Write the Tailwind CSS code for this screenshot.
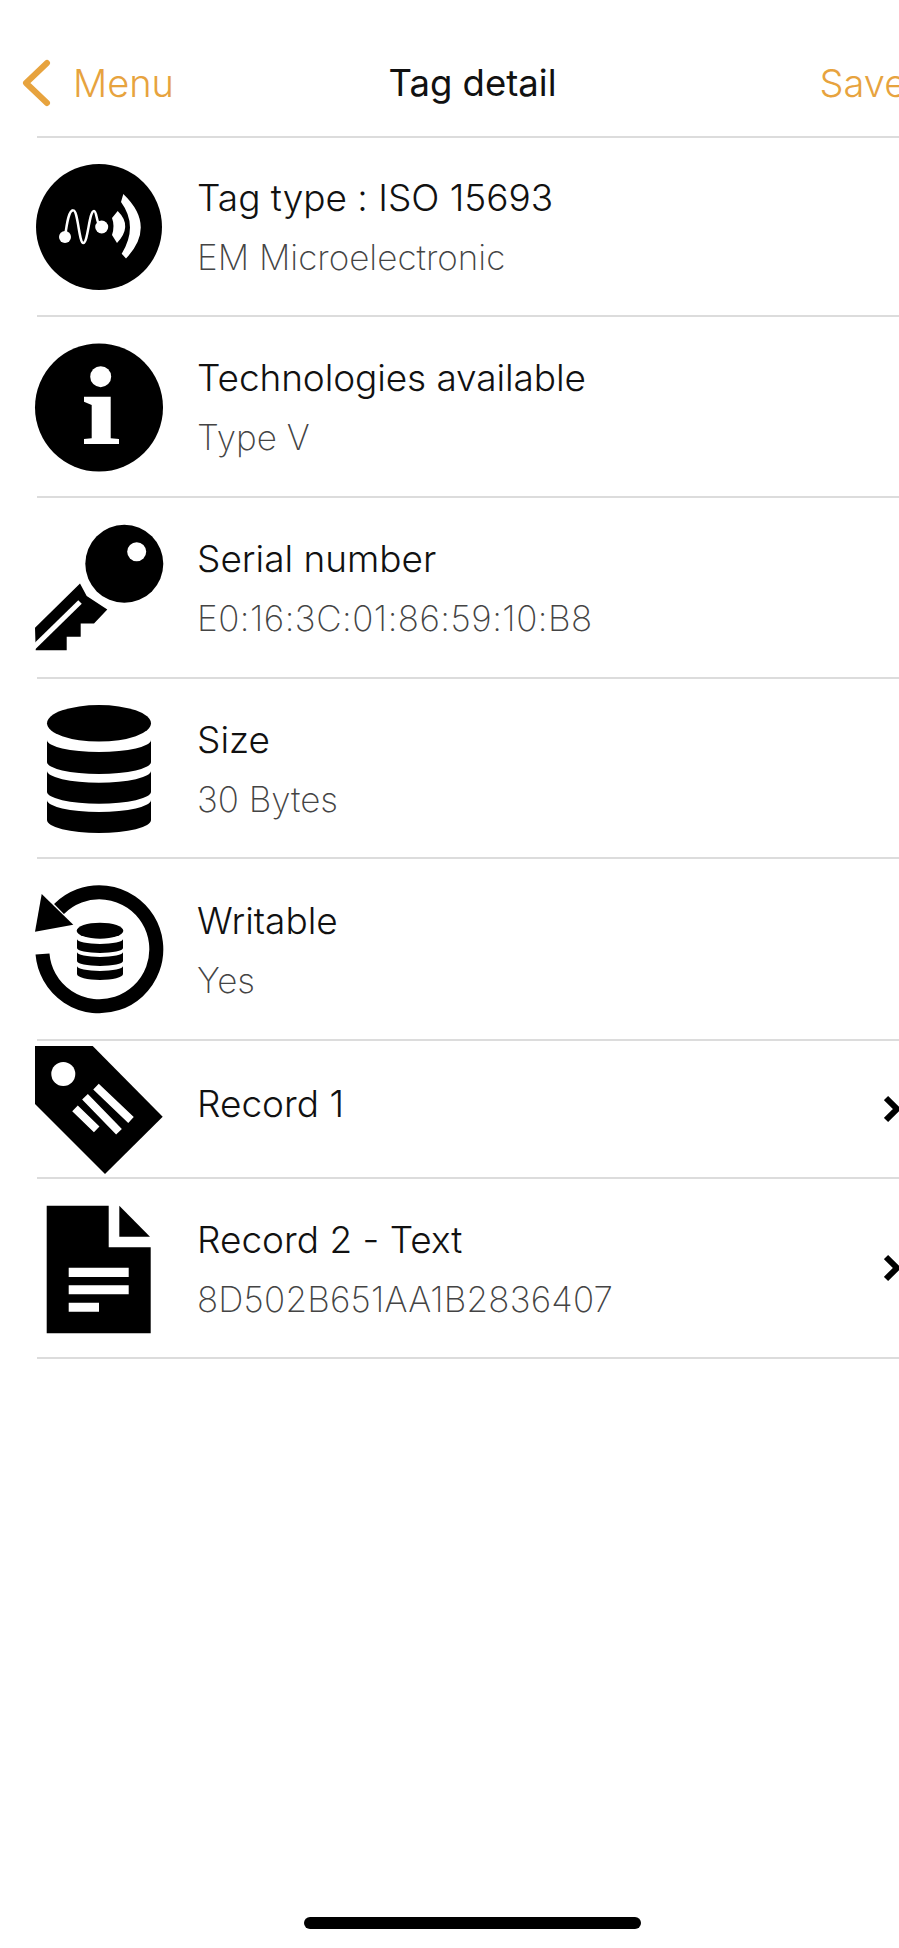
<!DOCTYPE html>
<html lang="en">
<head>
  <meta charset="UTF-8">
  <meta name="viewport" content="width=device-width,initial-scale=1.0">
  <title>Tag detail</title>
  <script src="https://cdn.jsdelivr.net/npm/@tailwindcss/browser@4"></script>
</head>
<body class="bg-white overflow-hidden font-['Inter',sans-serif] [font-feature-settings:'calt'_0] text-[#111]">
<div class="w-[899px] h-[1948px] overflow-hidden">
<div class="w-[945px] h-[1948px] flex flex-col">

  <!-- Navbar -->
  <header class="h-[136px] grid grid-cols-[1fr_auto_1fr] items-center pt-[30px]">
    <div class="flex items-center pl-[22px] gap-[21px] text-[#e7a33e]">
      <svg class="w-[30px] h-[48px]" viewBox="0 0 30 48" fill="none" stroke="currentColor" stroke-width="6" stroke-linecap="round" stroke-linejoin="round"><path d="M25 4 L4 24 L25 44"/></svg>
      <span class="text-[38px] leading-none font-light">Menu</span>
    </div>
    <h1 class="text-[36.5px] leading-none font-normal">Tag detail</h1>
    <div class="pl-[263px] text-[38px] leading-none font-light text-[#e7a33e]">Save</div>
  </header>

  <ul class="ml-[37px] border-t-2 border-[#dcdcdc]">
    <!-- Tag type -->
    <li class="h-[179px] flex items-center border-b-2 border-[#dcdcdc]">
      <svg class="-ml-[3px] w-[130px] h-[130px] shrink-0" viewBox="0 0 130 130">
        <circle cx="65" cy="65" r="63" fill="#000"/>
        <path d="M31 75 C33 60 35 48 39.3 48.3 C44 48.5 45 81 49.3 81 C54 81 55 49 60 49 C63 49 62 62 67 65" fill="none" stroke="#fff" stroke-width="2.5"/>
        <circle cx="31" cy="75" r="6" fill="#fff"/>
        <circle cx="67.7" cy="65" r="6.5" fill="#fff"/>
        <path d="M83.7 49 Q99 64 83 81 L78 73 Q81 64 78 56 Z" fill="#fff"/>
        <path d="M89.3 32 Q122.8 64 92 96.5 L87.7 91.7 Q104.6 64 87 40 Z" fill="#fff"/>
      </svg>
      <div class="ml-[33px]">
        <div class="text-[37px] leading-[44px] font-light">Tag type : ISO 15693</div>
        <div class="mt-[17px] text-[35px] leading-[40px] font-extralight text-[#444]">EM Microelectronic</div>
      </div>
    </li>
    <!-- Technologies -->
    <li class="h-[181px] flex items-center border-b-2 border-[#dcdcdc]">
      <svg class="-ml-[3px] w-[130px] h-[130px] shrink-0" viewBox="0 0 130 130">
        <circle cx="65" cy="65.5" r="64" fill="#000"/>
        <circle cx="66.7" cy="34.7" r="10.5" fill="#fff"/>
        <path d="M50 54.7 H76.7 V96.3 L85 97 V102 H50 V97 L57.7 96.3 V63 L50 59.7 Z" fill="#fff"/>
      </svg>
      <div class="ml-[33px]">
        <div class="text-[37px] leading-[44px] font-light tracking-[-0.1px]">Technologies available</div>
        <div class="mt-[17px] text-[35px] leading-[40px] font-extralight text-[#444]">Type V</div>
      </div>
    </li>
    <!-- Serial -->
    <li class="h-[181px] flex items-center border-b-2 border-[#dcdcdc]">
      <svg class="-ml-[3px] w-[130px] h-[130px] shrink-0" viewBox="0 0 130 130">
        <circle cx="90.3" cy="40.8" r="39" fill="#000"/>
        <circle cx="102.7" cy="28.8" r="9.5" fill="#fff"/>
        <path d="M46 60.5 L52.7 73 L73.3 86.5 L60 100.5 H46.7 V113.8 H32.7 V127.2 H1.7 L1 104.8 Z" fill="#000"/>
        <path d="M-1 125 L46 79" stroke="#fff" stroke-width="5" fill="none"/>
      </svg>
      <div class="ml-[33px]">
        <div class="text-[37px] leading-[44px] font-light">Serial number</div>
        <div class="mt-[17px] text-[35px] leading-[40px] font-extralight text-[#444] tracking-[0.5px]">E0:16:3C:01:86:59:10:B8</div>
      </div>
    </li>
    <!-- Size -->
    <li class="h-[180px] flex items-center border-b-2 border-[#dcdcdc]">
      <svg class="-ml-[3px] mt-[2px] w-[130px] h-[130px] shrink-0" viewBox="0 0 130 130">
        <ellipse cx="65" cy="19.3" rx="52" ry="18.3" fill="#000"/>
        <path d="M13 36 A52 12 0 0 0 117 36 V58 A52 12 0 0 1 13 58 Z" fill="#000"/>
        <path d="M13 66.7 A52 12 0 0 0 117 66.7 V87.7 A52 12 0 0 1 13 87.7 Z" fill="#000"/>
        <path d="M13 96 A52 12 0 0 0 117 96 V116 A52 13 0 0 1 13 116 Z" fill="#000"/>
      </svg>
      <div class="ml-[33px]">
        <div class="text-[37px] leading-[44px] font-light">Size</div>
        <div class="mt-[17px] text-[35px] leading-[40px] font-extralight text-[#444]">30 Bytes</div>
      </div>
    </li>
    <!-- Writable -->
    <li class="h-[182px] flex items-center border-b-2 border-[#dcdcdc]">
      <svg class="-ml-[3px] mt-[2px] w-[130px] h-[130px] shrink-0" viewBox="0 0 130 130">
        <path d="M8.5 69 A57 57 0 1 0 25 24" fill="none" stroke="#000" stroke-width="14"/>
        <path d="M7.7 9 L39.3 39.7 L1 46.7 Z" fill="#000"/>
        <ellipse cx="66" cy="45.7" rx="23.3" ry="8" fill="#000"/>
        <path d="M43 54 A23 5 0 0 0 89 54 V63 A23 5 0 0 1 43 63 Z" fill="#000"/>
        <path d="M43 67 A23 5 0 0 0 89 67 V76 A23 5 0 0 1 43 76 Z" fill="#000"/>
        <path d="M43 81 A23 5 0 0 0 89 81 V89 A23 6 0 0 1 43 89 Z" fill="#000"/>
      </svg>
      <div class="ml-[33px]">
        <div class="text-[37px] leading-[44px] font-light">Writable</div>
        <div class="mt-[17px] text-[35px] leading-[40px] font-extralight text-[#444]">Yes</div>
      </div>
    </li>
    <!-- Record 1 -->
    <li class="h-[138px] flex items-center border-b-2 border-[#dcdcdc]">
      <svg class="-ml-[3px] mt-[2px] w-[130px] h-[130px] shrink-0" viewBox="0 0 130 130">
        <path d="M1 1 H58.7 L128.7 71.7 L71 129 L1 59 Z" fill="#000"/>
        <circle cx="29.3" cy="29" r="12" fill="#fff"/>
        <path d="M62 41.7 L97 75 M51 51.7 L85 86.7 M41 63.3 L62.7 84.3" stroke="#fff" stroke-width="8" fill="none"/>
      </svg>
      <div class="ml-[33px] -mt-[10px] text-[37px] leading-[44px] font-light">Record 1</div>
      <svg class="ml-auto mr-[41px] w-[20px] h-[30px] shrink-0" viewBox="0 0 20 30" fill="none" stroke="#000" stroke-width="6"><path d="M2 4 L13 15 L2 26"/></svg>
    </li>
    <!-- Record 2 -->
    <li class="h-[180px] flex items-center border-b-2 border-[#dcdcdc]">
      <svg class="-ml-[3px] mt-[2px] w-[130px] h-[130px] shrink-0" viewBox="0 0 130 130">
        <path d="M12.7 1.7 H74.7 V43.3 H116.7 V129.3 H12.7 Z" fill="#000"/>
        <path d="M85.3 1.7 L116 32.7 H85.3 Z" fill="#000"/>
        <path d="M34.7 63.7 H94.7 V73 H34.7 Z M34.7 81.3 H94.7 V90.3 H34.7 Z M34.7 98.7 H65 V107.7 H34.7 Z" fill="#fff"/>
      </svg>
      <div class="ml-[33px]">
        <div class="text-[37px] leading-[44px] font-light">Record 2 - Text</div>
        <div class="mt-[17px] text-[35px] leading-[40px] font-extralight text-[#444] tracking-[0.2px]">8D502B651AA1B2836407</div>
      </div>
      <svg class="ml-auto mr-[41px] -mt-[1px] w-[20px] h-[30px] shrink-0" viewBox="0 0 20 30" fill="none" stroke="#000" stroke-width="6"><path d="M2 4 L13 15 L2 26"/></svg>
    </li>
  </ul>

  <!-- Home indicator -->
  <div class="mt-auto mb-[19px] mx-auto w-[337px] h-[12px] rounded-full bg-black"></div>
</div>
</div>
</body>
</html>
